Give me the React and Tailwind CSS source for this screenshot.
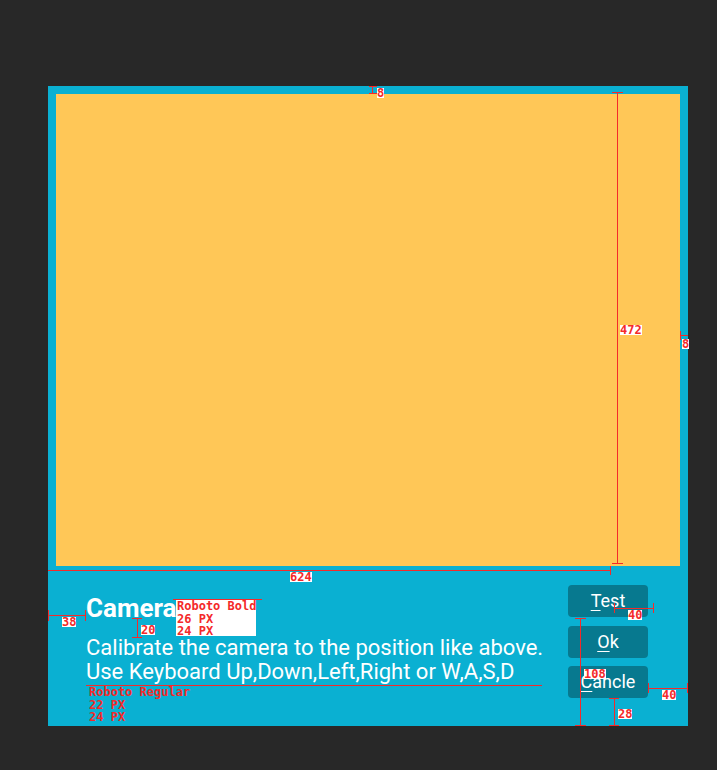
function Btn({ first, rest, className = "" }) {
  return (
    <button className={"flex h-8 w-20 items-center justify-center rounded-[4px] bg-[#07798f] text-[18px] leading-8 text-white " + className}>
      <span>
        <span className="underline decoration-1 underline-offset-[3px]">{first}</span>
        {rest}
      </span>
    </button>
  )
}

function Tag({ className, children }) {
  return (
    <div className={"absolute whitespace-nowrap bg-white text-[12px] font-bold leading-[10px] text-[#f42a2a] " + className}>
      {children}
    </div>
  )
}

function Note({ className, lines }) {
  return (
    <div className={"absolute flex flex-col whitespace-nowrap text-[12px] font-bold leading-[12.7px] text-[#f42a2a] " + className}>
      {lines.map((l) => (
        <span key={l}>{l}</span>
      ))}
    </div>
  )
}

export default function App() {
  return (
    <div className="relative h-[770px] w-[717px] overflow-hidden bg-[#282828] pl-[48px] pt-[86px] font-['Roboto',sans-serif]">
      <div className="flex h-[640px] w-[640px] flex-col bg-[#0ab0d2]">
        <div className="mx-2 mt-2 h-[472px] bg-[#ffc757]" />

        <div className="flex flex-1 justify-between pl-[38px] pr-[40px]">
          <div className="pt-[30px] text-white">
            <h1 className="text-[26px] font-bold leading-6">Camera</h1>
            <p className="mt-4 text-[22px] leading-6">
              Calibrate the camera to the position like above.
              <br />
              Use Keyboard Up,Down,Left,Right or W,A,S,D
            </p>
          </div>

          <div className="flex flex-col pt-[19px]">
            <Btn first="T" rest="est" />
            <Btn first="O" rest="k" className="mt-[9px]" />
            <Btn first="C" rest="ancle" className="mt-2" />
          </div>
        </div>
      </div>

      {/* redline annotations */}
      <div className="pointer-events-none font-['DejaVu_Sans_Mono',monospace]">
        {/* top 8 */}
        <div className="absolute left-[372px] top-[86px] h-[8px] w-px bg-[#f42a2a]" />
        <div className="absolute left-[369px] top-[86px] h-px w-[8px] bg-[#f42a2a]" />
        <div className="absolute left-[369px] top-[93px] h-px w-[8px] bg-[#f42a2a]" />
        <Tag className="left-[377px] top-[88px]">8</Tag>

        {/* 472 */}
        <div className="absolute left-[617px] top-[93px] h-[471px] w-px bg-[#f42a2a]" />
        <div className="absolute left-[612px] top-[92px] h-px w-[11px] bg-[#f42a2a]" />
        <div className="absolute left-[612px] top-[563px] h-px w-[11px] bg-[#f42a2a]" />
        <Tag className="left-[620px] top-[325px]">472</Tag>

        {/* right 8 */}
        <div className="absolute left-[680px] top-[335px] h-px w-[8px] bg-[#f42a2a]" />
        <div className="absolute left-[680px] top-[331px] h-[9px] w-px bg-[#f42a2a]" />
        <Tag className="left-[682px] top-[339px]">8</Tag>

        {/* 624 */}
        <div className="absolute left-[48px] top-[570px] h-px w-[562px] bg-[#f42a2a]" />
        <div className="absolute left-[610px] top-[566px] h-[9px] w-px bg-[#f42a2a]" />
        <Tag className="left-[290px] top-[572px]">624</Tag>

        {/* 38 */}
        <div className="absolute left-[48px] top-[615px] h-px w-[38px] bg-[#f42a2a]" />
        <div className="absolute left-[48px] top-[610px] h-[11px] w-px bg-[#f42a2a]" />
        <div className="absolute left-[85px] top-[610px] h-[11px] w-px bg-[#f42a2a]" />
        <Tag className="left-[62px] top-[617px]">38</Tag>

        {/* 20 */}
        <div className="absolute left-[137px] top-[618px] h-[19px] w-px bg-[#f42a2a]" />
        <div className="absolute left-[132px] top-[618px] h-px w-[10px] bg-[#f42a2a]" />
        <div className="absolute left-[132px] top-[637px] h-px w-[10px] bg-[#f42a2a]" />
        <Tag className="left-[141px] top-[625px]">20</Tag>

        {/* Roboto Bold note */}
        <div className="absolute left-[173px] top-[599px] h-px w-[89px] bg-[#f42a2a]" />
        <Note className="left-[176px] top-[600px] h-[36px] w-[80px] bg-white pl-[1px]" lines={["Roboto Bold", "26 PX", "24 PX"]} />

        {/* Roboto Regular note */}
        <div className="absolute left-[86px] top-[685px] h-px w-[456px] bg-[#f42a2a]" />
        <Note className="left-[89px] top-[686px]" lines={["Roboto Regular", "22 PX", "24 PX"]} />

        {/* 40 test */}
        <div className="absolute left-[614px] top-[608px] h-px w-[39px] bg-[#f42a2a]" />
        <div className="absolute left-[614px] top-[603px] h-[10px] w-px bg-[#f42a2a]" />
        <div className="absolute left-[653px] top-[603px] h-[10px] w-px bg-[#f42a2a]" />
        <Tag className="left-[628px] top-[610px]">40</Tag>

        {/* 108 */}
        <div className="absolute left-[580px] top-[618px] h-[108px] w-px bg-[#f42a2a]" />
        <div className="absolute left-[575px] top-[618px] h-px w-[11px] bg-[#f42a2a]" />
        <div className="absolute left-[575px] top-[725px] h-px w-[11px] bg-[#f42a2a]" />
        <Tag className="left-[584px] top-[669px]">108</Tag>

        {/* 40 right */}
        <div className="absolute left-[648px] top-[688px] h-px w-[40px] bg-[#f42a2a]" />
        <div className="absolute left-[648px] top-[683px] h-[10px] w-px bg-[#f42a2a]" />
        <div className="absolute left-[687px] top-[683px] h-[10px] w-px bg-[#f42a2a]" />
        <Tag className="left-[662px] top-[690px]">40</Tag>

        {/* 28 */}
        <div className="absolute left-[614px] top-[698px] h-[28px] w-px bg-[#f42a2a]" />
        <div className="absolute left-[609px] top-[698px] h-px w-[10px] bg-[#f42a2a]" />
        <div className="absolute left-[609px] top-[725px] h-px w-[10px] bg-[#f42a2a]" />
        <Tag className="left-[618px] top-[709px]">28</Tag>
      </div>
    </div>
  )
}
